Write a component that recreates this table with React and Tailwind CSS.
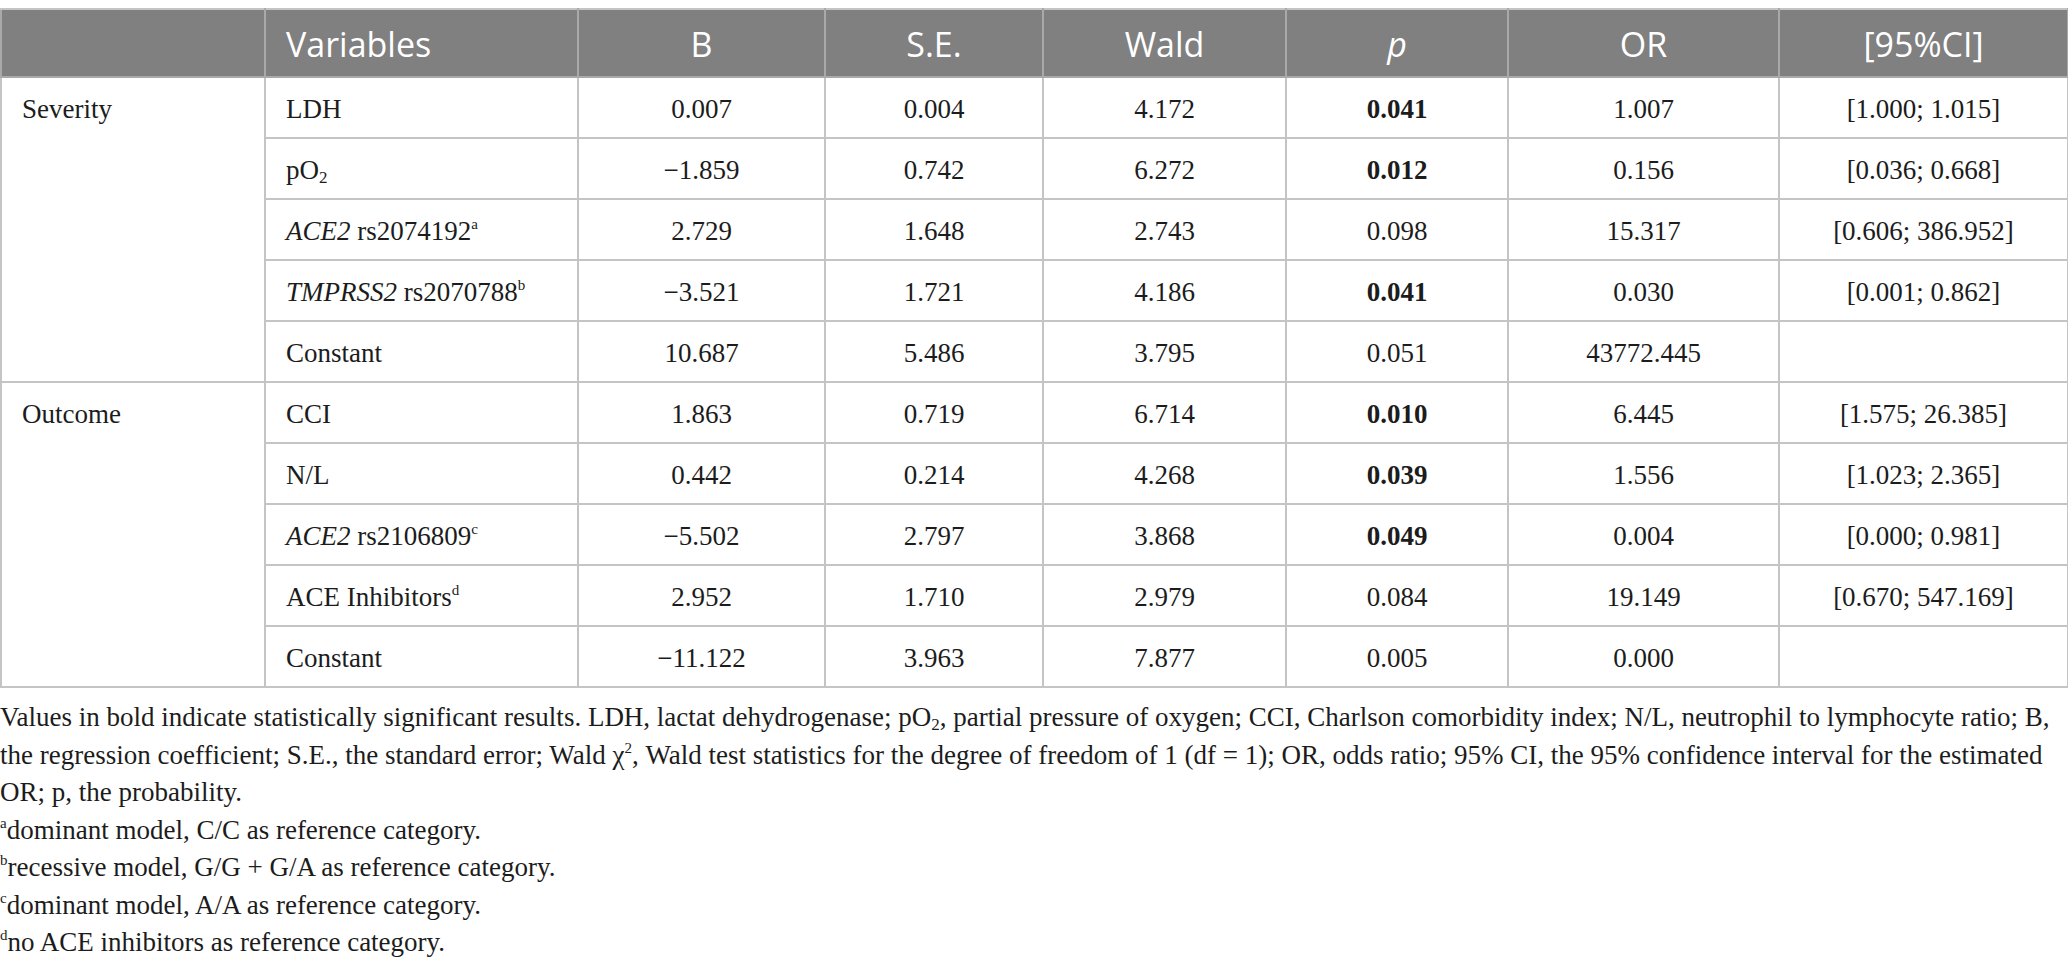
const COLS = [264, 313, 247, 218, 243, 222, 271, 289];

const HEADERS = ['', 'Variables', 'B', 'S.E.', 'Wald', 'p', 'OR', '[95%CI]'];

const Sub = ({ children }) => (
  <sub className="text-[17px] relative top-[4px] align-baseline">{children}</sub>
);
const Sup = ({ children }) => (
  <sup className="text-[15px] relative -top-[11px] align-baseline">{children}</sup>
);

const GROUPS = [
  {
    name: 'Severity',
    rows: [
      { v: <>LDH</>, b: '0.007', se: '0.004', wald: '4.172', p: '0.041', sig: true, or: '1.007', ci: '[1.000; 1.015]' },
      { v: <>pO<Sub>2</Sub></>, b: '\u22121.859', se: '0.742', wald: '6.272', p: '0.012', sig: true, or: '0.156', ci: '[0.036; 0.668]' },
      { v: <><i>ACE2</i> rs2074192<Sup>a</Sup></>, b: '2.729', se: '1.648', wald: '2.743', p: '0.098', or: '15.317', ci: '[0.606; 386.952]' },
      { v: <><i>TMPRSS2</i> rs2070788<Sup>b</Sup></>, b: '\u22123.521', se: '1.721', wald: '4.186', p: '0.041', sig: true, or: '0.030', ci: '[0.001; 0.862]' },
      { v: <>Constant</>, b: '10.687', se: '5.486', wald: '3.795', p: '0.051', or: '43772.445', ci: '' },
    ],
  },
  {
    name: 'Outcome',
    rows: [
      { v: <>CCI</>, b: '1.863', se: '0.719', wald: '6.714', p: '0.010', sig: true, or: '6.445', ci: '[1.575; 26.385]' },
      { v: <>N/L</>, b: '0.442', se: '0.214', wald: '4.268', p: '0.039', sig: true, or: '1.556', ci: '[1.023; 2.365]' },
      { v: <><i>ACE2</i> rs2106809<Sup>c</Sup></>, b: '\u22125.502', se: '2.797', wald: '3.868', p: '0.049', sig: true, or: '0.004', ci: '[0.000; 0.981]' },
      { v: <>ACE Inhibitors<Sup>d</Sup></>, b: '2.952', se: '1.710', wald: '2.979', p: '0.084', or: '19.149', ci: '[0.670; 547.169]' },
      { v: <>Constant</>, b: '\u221211.122', se: '3.963', wald: '7.877', p: '0.005', or: '0.000', ci: '' },
    ],
  },
];

const cell = 'border-2 border-[#c4c4c4] h-[61px] pt-[4px] pb-0';

export default function App() {
  return (
    <div className="bg-white w-[2068px] pt-[8px] font-['Liberation_Serif','Times_New_Roman',serif] text-[27px] text-[#1c1c1c]">
      <table className="w-full table-fixed border-collapse">
        <colgroup>
          {COLS.map((w, i) => (
            <col key={i} style={{ width: w }} />
          ))}
        </colgroup>
        <thead>
          <tr className="bg-[#7f807f] text-white font-['Open_Sans','Noto_Sans',sans-serif] text-[34px]">
            {HEADERS.map((h, i) => (
              <th
                key={i}
                className={`border-2 border-[#a9a9a9] border-t-[#c4c4c4] h-[68px] pt-[2px] font-normal ${i === 1 ? 'text-left pl-[20px]' : 'text-center'} ${i === 5 ? 'italic' : ''}`}
              >
                {h}
              </th>
            ))}
          </tr>
        </thead>
        <tbody>
          {GROUPS.map((g) =>
            g.rows.map((r, ri) => (
              <tr key={g.name + ri}>
                {ri === 0 && (
                  <td rowSpan={g.rows.length} className="border-2 border-[#c4c4c4] p-0 align-top pl-[20px]">
                    <div className="h-[59px] pt-[4px] flex items-center">{g.name}</div>
                  </td>
                )}
                <td className={`${cell} pl-[20px] whitespace-nowrap`}>{r.v}</td>
                <td className={`${cell} text-center`}>{r.b}</td>
                <td className={`${cell} text-center`}>{r.se}</td>
                <td className={`${cell} text-center`}>{r.wald}</td>
                <td className={`${cell} text-center ${r.sig ? 'font-bold' : ''}`}>{r.p}</td>
                <td className={`${cell} text-center`}>{r.or}</td>
                <td className={`${cell} text-center`}>{r.ci}</td>
              </tr>
            ))
          )}
        </tbody>
      </table>

      <div className="mt-[11px] leading-[37.5px] whitespace-nowrap">
        <div>
          Values in bold indicate statistically significant results. LDH, lactat dehydrogenase; pO<Sub>2</Sub>, partial pressure of oxygen; CCI, Charlson comorbidity index; N/L, neutrophil to lymphocyte ratio; B,
        </div>
        <div>
          the regression coefficient; S.E., the standard error; Wald χ<Sup>2</Sup>, Wald test statistics for the degree of freedom of 1 (df = 1); OR, odds ratio; 95% CI, the 95% confidence interval for the estimated
        </div>
        <div>OR; p, the probability.</div>
        <div><Sup>a</Sup>dominant model, C/C as reference category.</div>
        <div><Sup>b</Sup>recessive model, G/G + G/A as reference category.</div>
        <div><Sup>c</Sup>dominant model, A/A as reference category.</div>
        <div><Sup>d</Sup>no ACE inhibitors as reference category.</div>
      </div>
    </div>
  );
}
